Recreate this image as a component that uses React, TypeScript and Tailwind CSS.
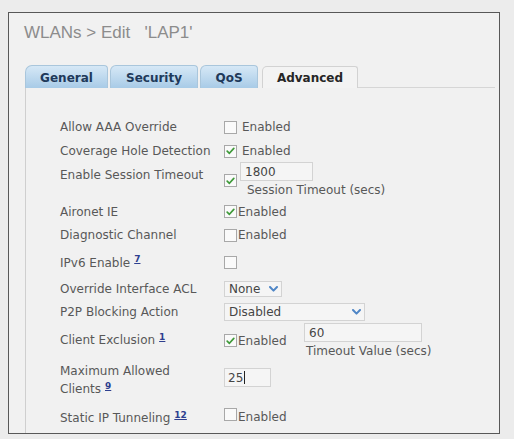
import React from "react";

const Check = () => (
  <svg width="9" height="8" viewBox="0 0 9 8" className="block">
    <path d="M1.2 4.2 L3.4 6.3 L7.8 1.4" fill="none" stroke="#3f9a3a" strokeWidth="1.7" strokeLinecap="round" strokeLinejoin="round" />
  </svg>
);

const Box = ({ checked = false, className = "" }: { checked?: boolean; className?: string }) => (
  <span
    className={
      "inline-flex h-[13px] w-[13px] shrink-0 items-center justify-center border border-[#a8a8a8] bg-[#fafafa] " +
      className
    }
  >
    {checked ? <Check /> : null}
  </span>
);

const Chevron = () => (
  <svg width="9" height="6" viewBox="0 0 9 6" className="block">
    <path d="M1 1 L4.5 4.6 L8 1" fill="none" stroke="#4f86c6" strokeWidth="2" strokeLinecap="round" strokeLinejoin="round" />
  </svg>
);

const Sup = ({ n }: { n: string }) => (
  <sup className="ml-[4px] text-[9px] font-bold text-[#2e3f8f] underline">{n}</sup>
);

const Label = ({ children, className = "" }: { children: React.ReactNode; className?: string }) => (
  <div className={"w-[164px] shrink-0 text-[12px] leading-[16px] text-[#585858] " + className}>{children}</div>
);

const Enabled = ({ className = "" }: { className?: string }) => (
  <span className={"text-[12px] leading-[16px] text-[#585858] " + className}>Enabled</span>
);

export default function App() {
  return (
    <div
      className="h-[439px] w-[514px] bg-[#ececec] pl-[8px] pt-[12px]"
      style={{ fontFamily: '"DejaVu Sans", Verdana, sans-serif' }}
    >
      <div className="flex h-[422px] w-[492px] flex-col border border-[#585858] bg-[#f1f1f1]">
        {/* Title */}
        <div
          className="pl-[15px] pt-[10px] text-[17px] leading-[20px] text-[#8c8c8c]"
          style={{ fontFamily: '"Liberation Sans", Arial, sans-serif' }}
        >
          WLANs &gt; Edit &nbsp;&nbsp;'LAP1'
        </div>

        {/* Tabs */}
        <div className="ml-[16px] mt-[22px] flex h-[23px] w-[470px] items-end">
          <div className="flex h-[23px] w-[83px] items-center justify-center rounded-tl-[7px] rounded-tr-[4px] border border-b-0 border-[#a9c6dc] bg-gradient-to-b from-[#d6e8f6] to-[#a8cbe7] pt-[1px] text-[12px] font-bold text-[#20395a]">
            General
          </div>
          <div className="ml-[2px] flex h-[23px] w-[88px] items-center justify-center rounded-tl-[6px] rounded-tr-[4px] border border-b-0 border-[#a9c6dc] bg-gradient-to-b from-[#d6e8f6] to-[#a8cbe7] pt-[1px] text-[12px] font-bold text-[#20395a]">
            Security
          </div>
          <div className="ml-[2px] flex h-[23px] w-[58px] items-center justify-center rounded-tl-[6px] rounded-tr-[4px] border border-b-0 border-[#a9c6dc] bg-gradient-to-b from-[#d6e8f6] to-[#a8cbe7] pt-[1px] text-[12px] font-bold text-[#20395a]">
            QoS
          </div>
          <div className="ml-[4px] flex h-[22px] w-[96px] items-center justify-center rounded-tl-[5px] rounded-tr-[3px] border border-b-0 border-[#d2d2d2] bg-[#f3f3f3] pt-[1px] text-[12px] font-bold text-[#262626]">
            Advanced
          </div>
          <div className="h-[23px] flex-1 border-b border-[#d6d6d6]"></div>
        </div>

        {/* Panel */}
        <div className="ml-[16px] flex w-[470px] flex-1 flex-col border-l border-[#cfcfcf] pl-[34px] pt-[27px]">
          {/* Allow AAA Override */}
          <div className="flex h-[24px] items-center">
            <Label>Allow AAA Override</Label>
            <Box />
            <Enabled className="ml-[5px]" />
          </div>
          {/* Coverage Hole Detection */}
          <div className="flex h-[24px] items-center">
            <Label>Coverage Hole Detection</Label>
            <Box checked />
            <Enabled className="ml-[5px]" />
          </div>
          {/* Enable Session Timeout */}
          <div className="flex h-[37px] items-start">
            <Label className="pt-[4px]">Enable Session Timeout</Label>
            <Box checked className="mt-[11px]" />
            <div className="ml-[3px] mt-[-1px] flex flex-col">
              <div className="flex h-[19px] w-[73px] items-center border border-[#d3d3d3] bg-[#f5f5f5] pl-[4px] text-[12px] text-[#454545]">
                1800
              </div>
              <div className="ml-[7px] mt-[1px] text-[12px] leading-[16px] text-[#585858]">Session Timeout (secs)</div>
            </div>
          </div>
          {/* Aironet IE */}
          <div className="flex h-[23px] items-center">
            <Label>Aironet IE</Label>
            <Box checked />
            <Enabled className="ml-[1px]" />
          </div>
          {/* Diagnostic Channel */}
          <div className="flex h-[24px] items-center">
            <Label>Diagnostic Channel</Label>
            <Box />
            <Enabled className="ml-[1px]" />
          </div>
          {/* IPv6 Enable */}
          <div className="flex h-[31px] items-center">
            <Label>
              IPv6 Enable
              <Sup n="7" />
            </Label>
            <Box />
          </div>
          {/* Override Interface ACL */}
          <div className="flex h-[21px] items-center">
            <Label>Override Interface ACL</Label>
            <div className="flex h-[16px] w-[58px] items-center justify-between border border-[#d3d3d3] bg-[#f5f5f5] pl-[4px] pr-[3px] text-[12px] text-[#454545]">
              <span>None</span>
              <Chevron />
            </div>
          </div>
          {/* P2P Blocking Action */}
          <div className="flex h-[26px] items-center">
            <Label>P2P Blocking Action</Label>
            <div className="flex h-[18px] w-[141px] items-center justify-between border border-[#d3d3d3] bg-[#f5f5f5] pl-[4px] pr-[3px] text-[12px] text-[#454545]">
              <span>Disabled</span>
              <Chevron />
            </div>
          </div>
          {/* Client Exclusion */}
          <div className="flex h-[36px] items-start">
            <Label className="pt-[7px]">
              Client Exclusion
              <Sup n="1" />
            </Label>
            <div className="flex w-[80px] items-start">
              <Box checked className="mt-[9px]" />
              <Enabled className="ml-[1px] mt-[8px]" />
            </div>
            <div className="mt-[-2px] flex flex-col">
              <div className="flex h-[19px] w-[118px] items-center border border-[#d3d3d3] bg-[#f5f5f5] pl-[4px] text-[12px] text-[#454545]">
                60
              </div>
              <div className="ml-[2px] mt-[1px] text-[12px] leading-[16px] text-[#585858]">Timeout Value (secs)</div>
            </div>
          </div>
          {/* Maximum Allowed Clients */}
          <div className="flex h-[38px] items-start">
            <Label className="pt-[1px] leading-[18px]">
              Maximum Allowed
              <br />
              Clients
              <Sup n="9" />
            </Label>
            <div className="mt-[7px] flex h-[19px] w-[47px] items-center border border-[#d3d3d3] bg-[#f5f5f5] pl-[3px] text-[12px] text-[#454545]">
              25
              <span className="ml-[1px] h-[13px] w-px bg-[#222]"></span>
            </div>
          </div>
          {/* Static IP Tunneling */}
          <div className="flex h-[32px] items-start">
            <Label className="pt-[11px]">
              Static IP Tunneling
              <Sup n="12" />
            </Label>
            <Box className="mt-[9px]" />
            <Enabled className="ml-[1px] mt-[10px]" />
          </div>
        </div>
      </div>
    </div>
  );
}
